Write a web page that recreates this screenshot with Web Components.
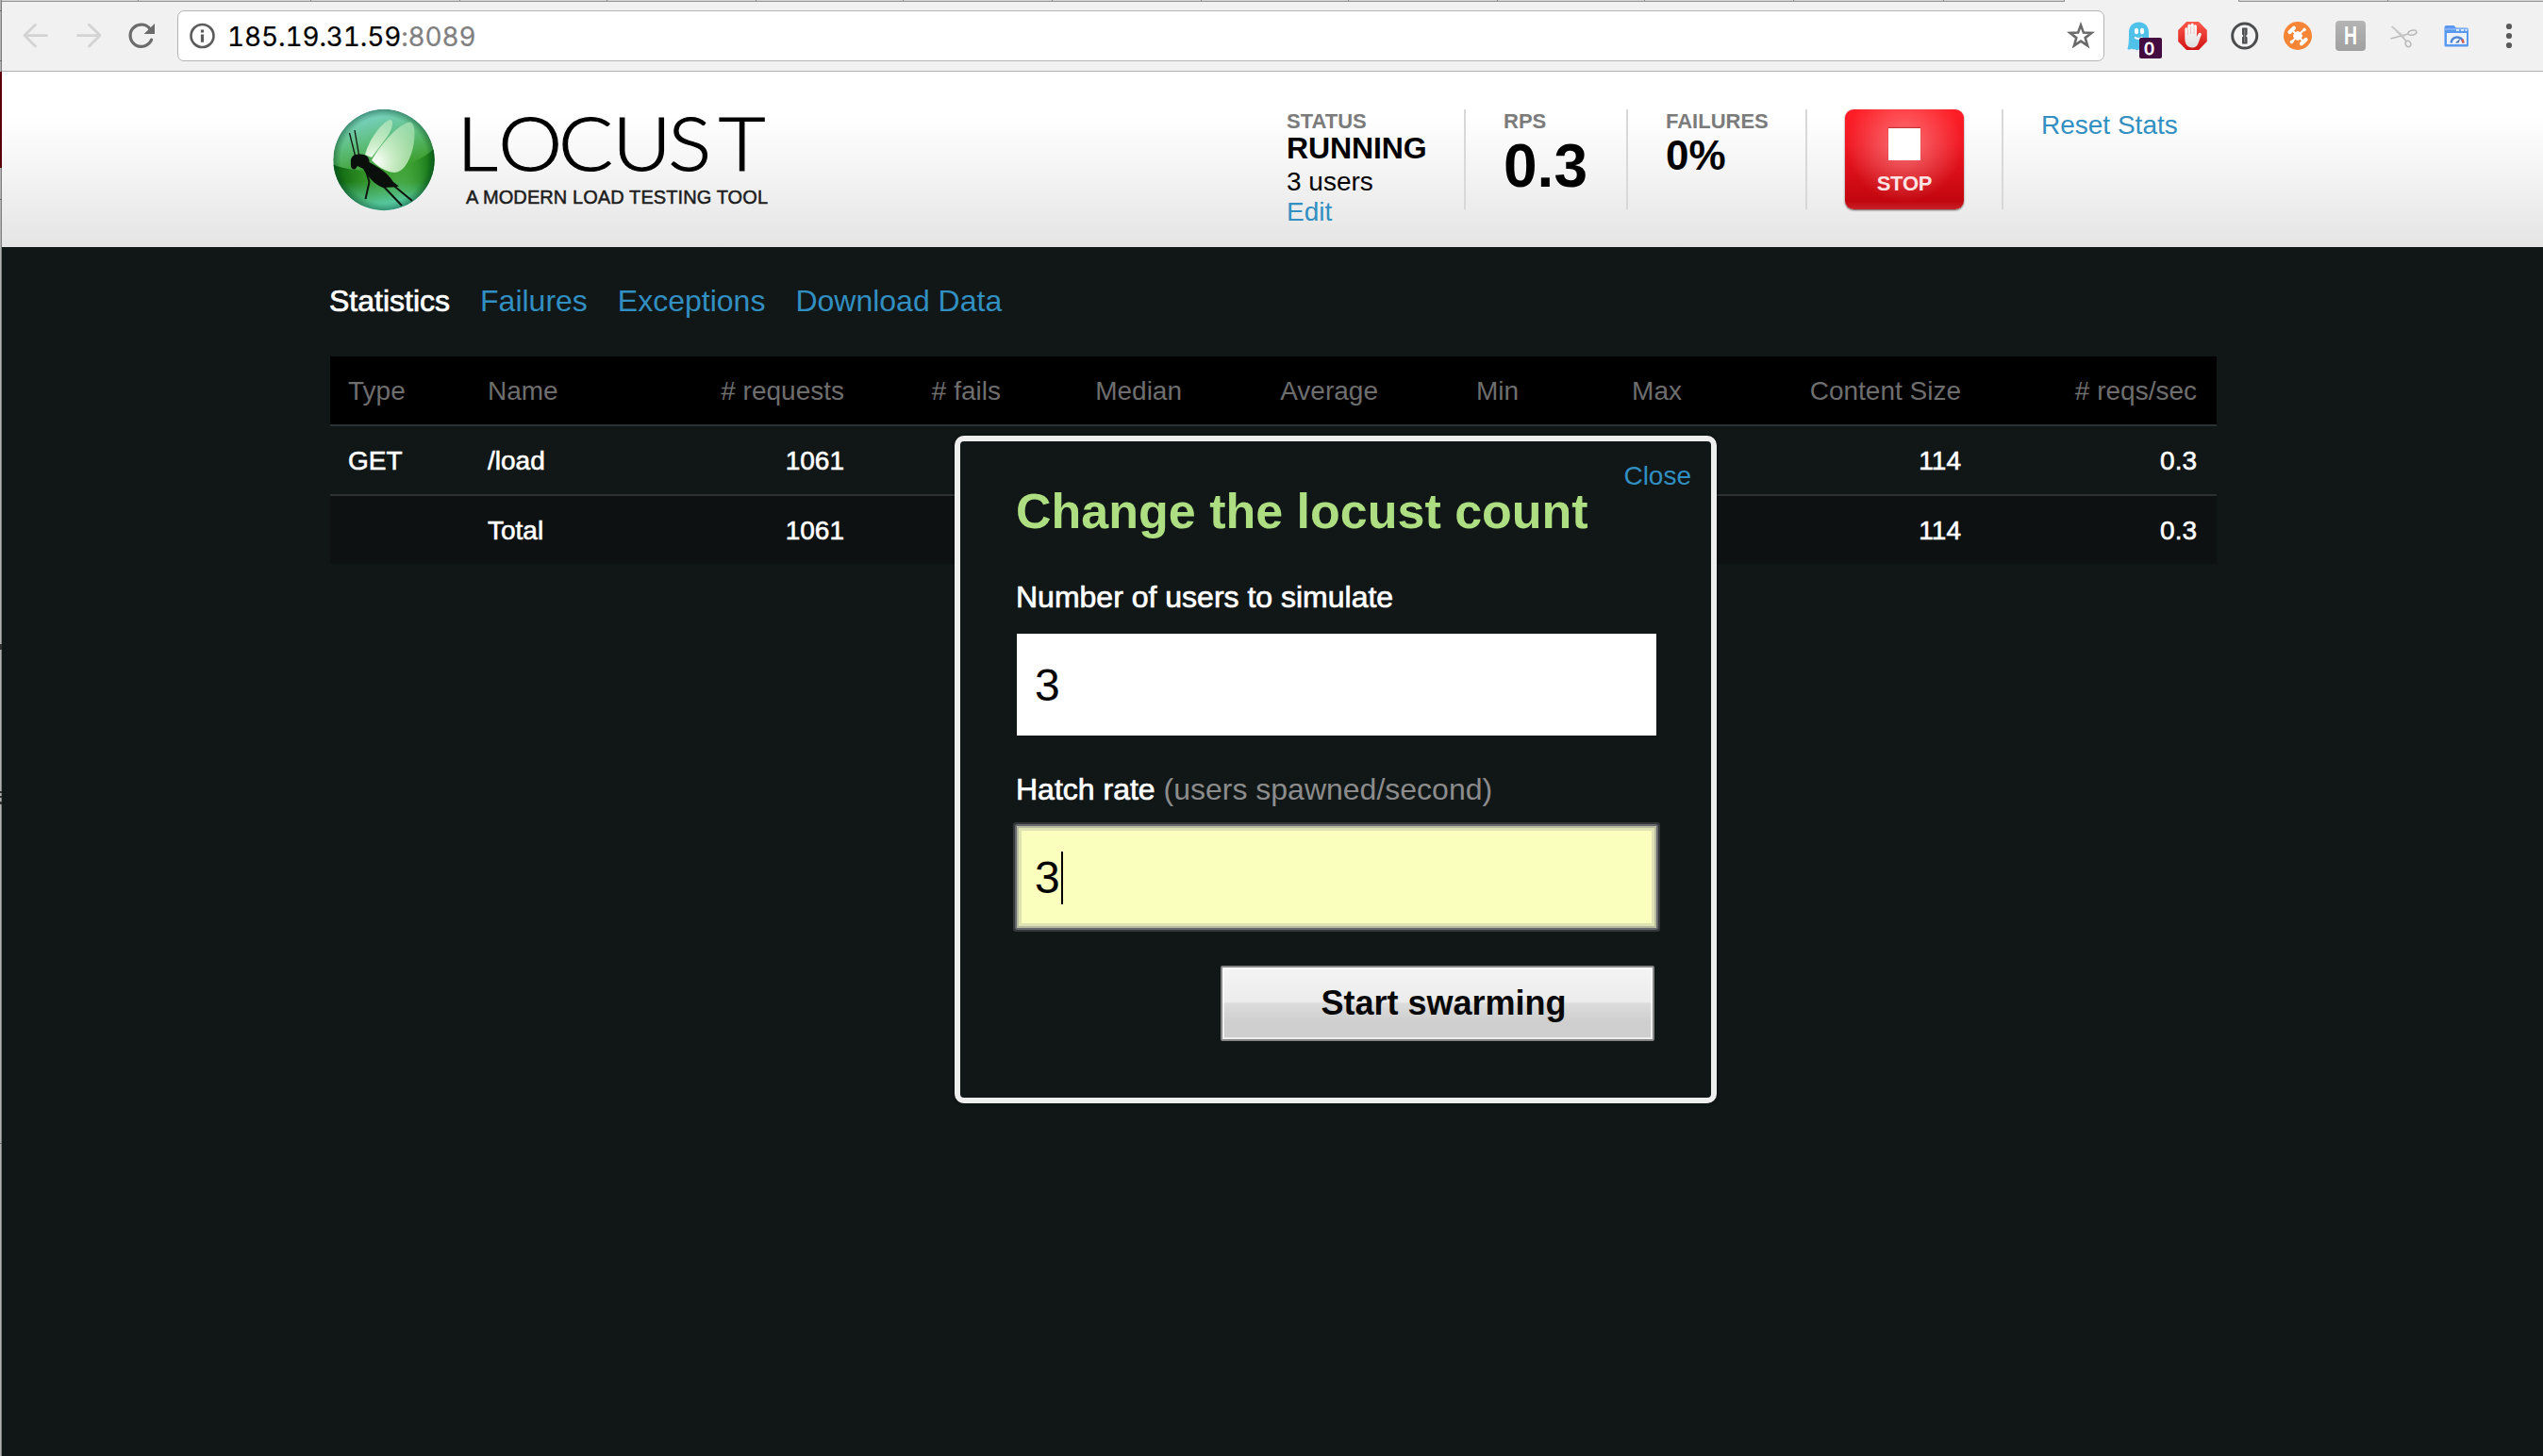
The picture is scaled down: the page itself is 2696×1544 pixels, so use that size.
<!DOCTYPE html>
<html lang="en">
<head>
<meta charset="utf-8">
<title>Locust</title>
<style>
html,body{margin:0;height:100%;background:#111717}
body{font-family:"Liberation Sans",Arial,sans-serif;overflow:hidden}
</style>
</head>
<body>
<locust-window></locust-window>
<script>
const define = (name, html) => customElements.define(name, class extends HTMLElement {
  constructor() {
    super();
    this.attachShadow({mode: 'open'}).innerHTML = typeof html === 'function' ? html(this) : html;
  }
});

const TICKS = [146,329,487,643,801,957,1115,1273,1429,1587,1743,1901,2060];
define('tab-edge', `
<style>:host{display:block;height:2px}svg{display:block}</style>
<svg width="2694" height="2" viewBox="2 0 2694 2" shape-rendering="crispEdges">
<rect x="2" width="2187" height="1" fill="#d2d2d2"/><rect x="2" y="1" width="2187" height="1" fill="#979797"/>
<rect x="2373" width="323" height="1" fill="#d2d2d2"/><rect x="2373" y="1" width="323" height="1" fill="#979797"/>
${TICKS.concat([2188,2373,2531]).map(x => `<rect x="${x}" width="1" height="1" fill="#8a8a8a"/>`).join('')}
</svg>`);

define('nav-icons', `
<style>:host{display:block;width:186px;height:54px}svg{display:block}</style>
<svg width="186" height="54" viewBox="2 11 186 54" fill="none">
<g stroke="#d3d3d3" stroke-width="2.8" stroke-linecap="round" stroke-linejoin="round">
<path d="M49.5 37.6H26M37.5 26.3 26 37.6 37.5 48.9"/><path d="M82.500 37.6H106M94.5 26.3 106 37.6 94.5 48.9"/></g>
<path d="M160.6 42.2A11.7 11.7 0 1 1 158.4 29.8" stroke="#6b6b6b" stroke-width="3.2" stroke-linecap="round"/>
<path d="M164 25V36H152.6Z" fill="#6b6b6b"/>
</svg>`);

define('address-bar', `
<style>
:host{display:flex;box-sizing:border-box;width:2044px;height:54px;border:1px solid #b4b4b4;border-radius:7px;background:#fff;align-items:center;padding:0 9px 0 12px}
.info{width:28px;height:28px}.star{margin-left:auto;width:30px;height:30px}
.url{margin:1px 0 0 12px;font:28px/44px Inter,"Noto Sans",sans-serif;font-variant-numeric:tabular-nums;color:#000;white-space:nowrap;letter-spacing:-.15px;-webkit-text-stroke:.2px}
.url span{color:#808080}
</style>
<svg class="info" viewBox="0 0 28 28"><circle cx="13.500" cy="14" r="12" fill="none" stroke="#5b5b5b" stroke-width="2.6"/><path d="M11.900 7.6h3.2v3h-3.2zM11.900 12.6h3.2v8.2h-3.2z" fill="#5b5b5b"/></svg>
<div class="url">185.19.31.59<span>:8089</span></div>
<svg class="star" viewBox="0 0 30 30"><path d="M15 3.6l2.9 8 8.6.3-6.8 5.2 2.4 8.3-7.1-4.8-7.1 4.8 2.4-8.3-6.8-5.2 8.6-.3z" fill="none" stroke="#6a6a6a" stroke-width="2.6"/></svg>`);

define('extension-icons', `
<style>:host{display:block;width:465px;height:54px}svg{display:block}text{font-family:"Liberation Sans",sans-serif}</style>
<svg width="465" height="54" viewBox="2231 11 465 54">
<defs>
<linearGradient id="r" x2="0" y2="1"><stop stop-color="#ff5a4c"/><stop offset="1" stop-color="#cf1414"/></linearGradient>
<linearGradient id="h" x2="0" y2="1"><stop stop-color="#b4b4b4"/><stop offset="1" stop-color="#a0a0a0"/></linearGradient>
<linearGradient id="w" x2="0" y2="1"><stop stop-color="#fff"/><stop offset="1" stop-color="#dedede"/></linearGradient>
</defs>
<path d="M2257 34c0-6.5 4.4-10.6 10.5-10.6S2278 27.500 2278 34v18h-10c-1.500 1.800-3.500 1.600-4.500 0-1.200.8-2.600.6-3.300-.6-1.300 1.200-3.200 1.300-4.800.5 1.400-3.600 1.600-8 1.600-17.900z" fill="#50c1e9"/>
<ellipse cx="2265" cy="33" rx="2.100" ry="3.200" fill="#fff"/><ellipse cx="2271" cy="33" rx="2.100" ry="3.200" fill="#fff"/>
<path d="M2263 39.500q4 3 8.500 0" stroke="#fff" stroke-width="2" fill="none"/>
<rect x="2268" y="40" width="24" height="22" rx="2" fill="#430b3f"/>
<text x="2278.500" y="58" font-size="19" text-anchor="middle" fill="#fff" stroke="#fff" stroke-width=".8">0</text>
<path d="M2318 23h13l8.800 9v12l-8.800 9h-13l-8.800-9v-12z" fill="url(#r)"/>
<path d="M2316.300 40V31c0-2.400 3-2.400 3 0v-3.500c0-2.400 3.200-2.400 3.200 0V26.500c0-2.400 3.300-2.400 3.300 0V28c0-2.300 3.100-2.300 3.100 0v11l1.700-3.300c1.300-2 3.800-.9 3.100 1.200l-3.200 8.800c-1.200 3.300-3 4.700-6.300 4.700-5 0-7.900-3.300-7.900-10.400z" fill="url(#w)"/>
<path d="M2319.500 31v6M2322.600 28v8M2326 28v8" stroke="#f0a9a2" stroke-width=".7"/>
<circle cx="2379.700" cy="38" r="13" fill="#f4f4f4" stroke="#4b4d4f" stroke-width="3"/>
<path d="M2377 29.500h5.500v7l-1.500 1.500 1.500 1.700v6.800H2377v-7l1.500-1.500-1.500-1.600z" fill="#4b4d4f"/><path d="M2379.700 31v14" stroke="#8b8b8b" stroke-width="1"/>
<circle cx="2436" cy="38" r="15" fill="#f68536"/>
<g stroke="#fff" stroke-linecap="round" fill="#fff"><circle cx="2436" cy="38" r="4.300"/><path d="M2429.500 31.500 2442.500 44.500M2442.500 31.500 2429.500 44.500" stroke-width="2"/><path d="M2427.500 34 2432 29.800M2440 46.300 2444.500 42" stroke-width="4.200"/><circle cx="2443" cy="31.500" r="1.400"/><circle cx="2429.500" cy="44.500" r="1.400"/></g>
<rect x="2476" y="22" width="32" height="32" rx="4" fill="url(#h)"/>
<text x="2485" y="47.300" font-size="27" font-weight="bold" textLength="14" lengthAdjust="spacingAndGlyphs" fill="#fff">H</text>
<g fill="none" stroke="#b9b9b9" stroke-width="1.500"><path d="M2536.500 28.500 2551.500 44M2534.500 41 2553 36"/><path d="M2535.500 28 2549 39.500" stroke="#cbcbcb" stroke-width="2"/><ellipse cx="2557.500" cy="34.600" rx="4.500" ry="2.500" transform="rotate(-12 2557.500 34.600)"/><ellipse cx="2553" cy="46.500" rx="2.700" ry="3.300" transform="rotate(-25 2553 46.500)"/></g>
<path d="M2591.500 29q0-2 2-2h8l2.500 2.500h11q2 0 2 2V48q0 1.500-1.500 1.500H2593q-1.500 0-1.500-1.500z" fill="#5b98ef"/>
<path d="M2591.500 31h25.500" stroke="#8cb9f8" stroke-width="1.500"/><path d="M2604 32h3M2609 32h3M2613.500 32h2" stroke="#fff" stroke-width="1.600"/>
<rect x="2594" y="35" width="21" height="12" fill="#eef3fb"/>
<path d="M2598.500 45.500c1.300-8 11.700-8 13 0" fill="none" stroke="#4e86d8" stroke-width="2.400"/><path d="M2610.300 41.800q1 1.600 1.200 3.700" stroke="#e0554a" stroke-width="2.400" fill="none"/><path d="M2603 45.500l5.500-5 -2 5z" fill="#4b6ea8"/>
<g fill="#5a5a5a"><circle cx="2660" cy="28" r="3.100"/><circle cx="2660" cy="38" r="3.100"/><circle cx="2660" cy="48" r="3.100"/></g>
</svg>`);

define('browser-toolbar', `
<style>
:host{display:block;box-sizing:border-box;height:76px;background:#f1f1f1;border-bottom:1px solid #b0b0b0}
.row{display:flex;padding-top:9px;height:54px}
</style>
<tab-edge></tab-edge><div class="row"><nav-icons></nav-icons><address-bar></address-bar><extension-icons></extension-icons></div>`);

define('locust-logo', `
<style>:host{display:block;width:480px;height:164px;flex:none}svg{display:block}</style>
<svg width="480" height="164" viewBox="350 76 480 164">
<defs>
<linearGradient id="g" x1=".35" y1="0" x2=".6" y2="1"><stop stop-color="#7fd6d2"/><stop offset=".3" stop-color="#5fbf80"/><stop offset=".58" stop-color="#3fa032"/><stop offset=".85" stop-color="#4bab50"/><stop offset="1" stop-color="#4fc4a8"/></linearGradient>
<radialGradient id="e" cx=".5" cy=".5" r=".5"><stop offset=".85" stop-color="#0b5a14" stop-opacity="0"/><stop offset="1" stop-color="#0a4a32" stop-opacity=".5"/></radialGradient>
<linearGradient id="d" x1="0" x2="1"><stop stop-color="#03570a"/><stop offset=".35" stop-color="#1d7d12" stop-opacity=".35"/><stop offset=".65" stop-color="#3fb030" stop-opacity="0"/><stop offset="1" stop-color="#05600c"/></linearGradient>
<linearGradient id="b" x1="0" y1="0" x2="0" y2="1"><stop offset=".35" stop-color="#4fc4a8" stop-opacity="0"/><stop offset="1" stop-color="#62d8be" stop-opacity=".95"/></linearGradient>
<radialGradient id="v" gradientUnits="userSpaceOnUse" cx="398" cy="172" r="50"><stop stop-color="#fff"/><stop offset=".4" stop-color="#d5f2d0" stop-opacity=".9"/><stop offset="1" stop-color="#bdeabf" stop-opacity=".6"/></radialGradient>
<clipPath id="c"><circle cx="407" cy="169.500" r="53.700"/></clipPath>
</defs>
<g clip-path="url(#c)">
<circle cx="407" cy="169.500" r="53.700" fill="url(#g)"/>
<path d="M352 174C375 185 435 184 462 156V226H352Z" fill="url(#d)"/>
<rect x="352" y="175" width="110" height="50" fill="url(#b)"/>
<circle cx="407" cy="169.500" r="53.700" fill="url(#e)"/>
<path d="M387 164C392 146 405 130 413.500 127C419 127 415 139 409 147L394 167Z" fill="url(#v)"/>
<path d="M394 170C404 152 424 130 435 129.500C441 131 440 148 437.500 158C434 172 427 183 418 183C408 182 400 176 394 170Z" fill="url(#v)"/>
</g>
<g stroke="#101510" fill="none"><path d="M376.500 165 370.500 141M380.500 164 376 138" stroke-width="1.300"/><path d="M388 181 391.500 193 387.500 211" stroke-width="2"/><path d="M405 196 426 218M414 194 437 213" stroke-width="2"/></g>
<path d="M372 173C371 166 376 163 381 163.500C388 163 392 167 391.500 172C401 177 412 184 417 193L423 197.500 416 198.500 406 199C397 196 389 186 385 179L379 176 376.500 179.500C373 180 371.500 177 372 173Z" fill="#0b0f0b"/>
<text transform="scale(1.1 1)" y="181.300" font-family="Lato" font-weight="300" font-size="78" fill="#000" stroke="#000" stroke-width="1.100" x="440.200 480.300 538.200 590.200 643.800 692.600">LOCUST</text>
<text x="494" y="216" font-family="Liberation Sans" font-size="20" fill="#1c1c1c" stroke="#1c1c1c" stroke-width=".5" textLength="320">A MODERN LOAD TESTING TOOL</text>
</svg>`);

define('stat-box', el => `
<style>
:host{display:block;box-sizing:content-box;height:106px;padding:0 40px 0 40px;border-right:2px solid #d8d8d8;white-space:nowrap;color:#000}
.label{width:0;height:23px;padding-top:1px;font:bold 22px/24px "Liberation Sans",sans-serif;color:#7b7b7b}
</style>
${el.getAttribute('label') ? `<div class="label">${el.getAttribute('label')}</div>` : ''}<slot></slot>`);

define('stop-button', `
<style>
:host{display:flex;flex-direction:column;align-items:center;box-sizing:border-box;width:126px;height:106px;padding-top:20px;border-radius:9px;
background:radial-gradient(circle 62px at 63px 36px,rgba(255,170,170,.62),rgba(255,120,120,0)),linear-gradient(#ff1e26,#f01722 35%,#c2060e 92%,#c8222a);box-shadow:0 1px 2px rgba(60,40,40,.75)}
i{width:34px;height:34px;background:#fff;box-shadow:0 -1px 1px rgba(120,0,0,.4)}
span{margin-top:12px;font:bold 22px/26px "Liberation Sans",sans-serif;color:#fde3e3;letter-spacing:-.2px}
</style><i></i><span>STOP</span>`);

define('app-header', `
<style>
:host{display:block;height:186px;background:linear-gradient(#fff,#fff 25%,#e6e6e6 96%,#e4e4e4)}
.in{display:flex;width:2000px;margin-left:348px;justify-content:flex-start}
.stats{display:flex;margin-left:494px;padding-top:40px}
a{color:#318fc2}
.run{font:bold 32px/34px "Liberation Sans",sans-serif;letter-spacing:-.1px}.users{font-size:28px;line-height:38px}.edit{display:block;font-size:28px;line-height:26px}
.rps{font:bold 64px/72px "Liberation Sans",sans-serif}.fail{font:bold 44px/50px "Liberation Sans",sans-serif}
.reset{font-size:28px;line-height:34px;margin-left:40px;white-space:nowrap}
.a{width:148px}.b{width:90px}.c{width:108px}
</style>
<div class="in"><locust-logo></locust-logo><div class="stats">
<stat-box label="STATUS"><div class="a run">RUNNING</div><div class="users">3 users</div><a class="edit">Edit</a></stat-box>
<stat-box label="RPS"><div class="b rps">0.3</div></stat-box>
<stat-box label="FAILURES"><div class="c fail">0%</div></stat-box>
<stat-box><stop-button></stop-button></stat-box>
<a class="reset">Reset Stats</a></div></div>`);

define('page-tabs', `
<style>:host{display:flex;gap:32px;margin-left:347px;padding-top:38px;height:78px;font-size:32px;line-height:38px;color:#318fc2;white-space:nowrap}
b{font-weight:400;color:#fff;-webkit-text-stroke:.7px #fff}</style>
<b>Statistics</b><span>Failures</span><span>Exceptions</span><span>Download Data</span>`);

const HEAD = ['Type','Name','# requests','# fails','Median','Average','Min','Max','Content Size','# reqs/sec'];
const ROWS = [['GET','/load','1061','','','','','','114','0.3'],['','Total','1061','','','','','','114','0.3']];
const cells = (r, t) => '<tr>' + r.map(c => `<${t}>${c}</${t}>`).join('') + '</tr>';
define('stats-table', `
<style>
:host{display:block;margin-left:348px;width:2000px}
table{width:2000px;table-layout:fixed;border-collapse:separate;border-spacing:0;font-size:28px;line-height:32px;color:#fff}
th,td{box-sizing:border-box;height:74px;padding:2px 20px 0;text-align:right;font-weight:400;white-space:nowrap;border-bottom:2px solid #2c3133}
th{background:#000;color:#6e6e6e}
td{-webkit-text-stroke:.6px #fff}
th:nth-child(-n+2),td:nth-child(-n+2){text-align:left}
th:first-child,td:first-child{padding-left:19px}
th:last-child,td:last-child{padding-right:21px}
tbody tr:last-child td{background:#0d1112;border-bottom:0;height:72px}
</style>
<table><colgroup>${[147,218,200,166,192,208,149,173,296,251].map(w => `<col style="width:${w}px">`).join('')}</colgroup>
<thead>${cells(HEAD, 'th')}</thead><tbody>${ROWS.map(r => cells(r, 'td')).join('')}</tbody></table>`);

define('form-field', `
<style>
:host{display:block}
.label{margin-left:-1px;padding-top:1px;font-size:32px;line-height:38px;color:#fff;-webkit-text-stroke:.7px #fff;white-space:nowrap}
::slotted(em){font-style:normal;color:#8c8c8c;-webkit-text-stroke:0}
.box{display:flex;align-items:center;box-sizing:border-box;width:678px;height:108px;margin-top:20px;padding:1px 20px 0 19px;background:#fff;color:#000;font-size:48px;line-height:56px}
:host([focused]) .box{background:#faffbd;box-shadow:inset 0 0 0 2px #b9bba0,inset 0 0 0 5px #dfe2b3,0 0 0 2px #67696d,0 0 0 4px #34383b;border-radius:1px}
i{display:none;width:2px;height:56px;margin-left:1px;background:#000}
:host([focused]) i{display:block}
</style>
<div class="label"><slot name="label"></slot></div><div class="box"><slot></slot><i></i></div>`);

define('swarm-button', `
<style>
:host{display:block;box-sizing:border-box;width:460px;height:80px;border:2px solid #858585;border-radius:2px;padding-left:13px;text-align:center;
background:linear-gradient(#f4f4f4,#ececec 48%,#dcdcdc 50%,#cfcfcf 75%,#cecece);box-shadow:inset 0 0 0 2px rgba(255,255,255,.65);
font:bold 36px/76px "Liberation Sans",sans-serif;color:#080808}
</style><slot></slot>`);

define('edit-dialog', `
<style>
:host{display:block;box-sizing:border-box;width:808px;height:708px;border:6px solid #eee;border-radius:10px;background:#111717;padding:20px 21px 0 59px;box-shadow:0 0 3px rgba(0,0,0,.6)}
.top{display:flex;justify-content:space-between;align-items:flex-start;height:125px}
h2{margin:24px 0 0;font:bold 52px/60px "Liberation Sans",sans-serif;color:#addf82;white-space:nowrap}
a{font-size:28px;line-height:34px;color:#318fc2}
form-field{margin-left:1px}
.f2{margin-top:37px}
swarm-button{margin:40px 0 0 217px}
</style>
<div class="top"><h2>Change the locust count</h2><a>Close</a></div>
<form-field><span slot="label">Number of users to simulate</span>3</form-field>
<form-field class="f2" focused><span slot="label">Hatch rate </span><em slot="label">(users spawned/second)</em>3</form-field>
<swarm-button>Start swarming</swarm-button>`);

define('window-edge', `
<style>:host{display:block;width:2px;height:1544px}svg{display:block}</style>
<svg width="2" height="1544" shape-rendering="crispEdges"><rect width="1" height="1544" fill="#b0b0b0"/><rect x="1" width="1" height="1544" fill="#808080"/>
<rect y="76" width="2" height="102" fill="#5c0007"/><path d="M0 11h2M0 64h2M0 211h2M0 1212h2" stroke="#666"/><path d="M0 683h2v6H0zM0 839h2v2H0zM0 844h2v2H0zM0 850h2v3H0z" fill="#333"/></svg>`);

define('locust-window', `
<style>
:host{display:flex;position:relative;width:2696px;height:1544px;overflow:hidden;background:#111717}
main{width:2694px}
edit-dialog{position:absolute;left:1012px;top:462px}
</style>
<window-edge></window-edge>
<main><browser-toolbar></browser-toolbar><app-header></app-header><page-tabs></page-tabs><stats-table></stats-table></main>
<edit-dialog></edit-dialog>`);
</script>
</body>
</html>
